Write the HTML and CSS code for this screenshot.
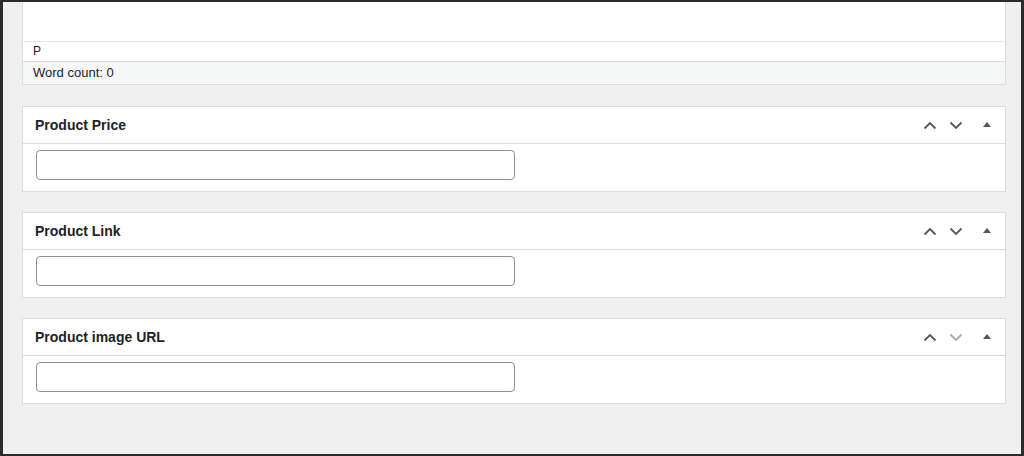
FILE: index.html
```html
<!DOCTYPE html>
<html>
<head>
<meta charset="utf-8">
<link rel="stylesheet" href="styles.css">
</head>
<body>
<div class="frame">
  <div class="editor">
    <div class="editor-area"></div>
    <div class="path">P</div>
    <div class="status">Word count: 0</div>
  </div>

  <div class="postbox">
    <div class="postbox-header">
      <h2 class="title">Product Price</h2>
      <div class="actions">
        <svg class="chev up" viewBox="0 0 14 9" width="14" height="9"><path d="M1.5 7.5 L7 2 L12.5 7.5"/></svg>
        <svg class="chev" viewBox="0 0 14 9" width="14" height="9"><path d="M1.5 1.5 L7 7 L12.5 1.5"/></svg>
        <svg class="tri" viewBox="0 0 8 6" width="8" height="6"><path d="M0 6 L4 1 L8 6 Z"/></svg>
      </div>
    </div>
    <div class="inside"><input class="field" type="text"></div>
  </div>

  <div class="postbox">
    <div class="postbox-header">
      <h2 class="title">Product Link</h2>
      <div class="actions">
        <svg class="chev up" viewBox="0 0 14 9" width="14" height="9"><path d="M1.5 7.5 L7 2 L12.5 7.5"/></svg>
        <svg class="chev" viewBox="0 0 14 9" width="14" height="9"><path d="M1.5 1.5 L7 7 L12.5 1.5"/></svg>
        <svg class="tri" viewBox="0 0 8 6" width="8" height="6"><path d="M0 6 L4 1 L8 6 Z"/></svg>
      </div>
    </div>
    <div class="inside"><input class="field" type="text"></div>
  </div>

  <div class="postbox">
    <div class="postbox-header">
      <h2 class="title">Product image URL</h2>
      <div class="actions">
        <svg class="chev up" viewBox="0 0 14 9" width="14" height="9"><path d="M1.5 7.5 L7 2 L12.5 7.5"/></svg>
        <svg class="chev disabled" viewBox="0 0 14 9" width="14" height="9"><path d="M1.5 1.5 L7 7 L12.5 1.5"/></svg>
        <svg class="tri" viewBox="0 0 8 6" width="8" height="6"><path d="M0 6 L4 1 L8 6 Z"/></svg>
      </div>
    </div>
    <div class="inside"><input class="field" type="text"></div>
  </div>
</div>
</body>
</html>
```

FILE: styles.css
```css
html, body {
  margin: 0;
  padding: 0;
  background: #2b2b2b;
}
body {
  width: 1024px;
  height: 456px;
  overflow: hidden;
  font-family: "Liberation Sans", Arial, sans-serif;
  color: #1d2327;
}
.frame {
  margin: 2px 3px;
  height: 452px;
  background: #f0f0f1;
  padding: 0 15px 0 19px;
  box-sizing: border-box;
  overflow: hidden;
}
.editor {
  background: #fff;
  border-left: 1px solid #dcdcde;
  border-right: 1px solid #dcdcde;
}
.editor-area {
  height: 39px;
  border-bottom: 1px solid #e8e8e8;
}
.path {
  height: 19px;
  line-height: 19px;
  font-size: 12px;
  padding-left: 10px;
  color: #1d2327;
}
.status {
  height: 22px;
  line-height: 22px;
  background: #f6f7f7;
  border-top: 1px solid #dcdcde;
  border-bottom: 1px solid #dcdcde;
  font-size: 13px;
  padding-left: 10px;
  color: #1d2327;
}
.postbox {
  margin-top: 21px;
  background: #fff;
  border: 1px solid #dcdcde;
}
.postbox + .postbox {
  margin-top: 20px;
}
.postbox-header {
  display: flex;
  align-items: center;
  justify-content: space-between;
  height: 36px;
  border-bottom: 1px solid #dcdcde;
}
.title {
  margin: 0;
  padding-left: 12px;
  font-size: 14px;
  font-weight: bold;
  color: #1d2327;
}
.actions {
  display: flex;
  align-items: center;
  padding-right: 14px;
}
.chev {
  fill: none;
  stroke: #50575e;
  stroke-width: 1.8;
}
.chev.up {
  margin-right: 12px;
}
.chev.disabled {
  stroke: #a7aaad;
}
.tri {
  fill: #50575e;
  margin-left: 20px;
  margin-bottom: 2px;
}
.inside {
  padding: 6px 12px 11px 13px;
}
.field {
  display: block;
  width: 479px;
  height: 30px;
  box-sizing: border-box;
  border: 1px solid #8c8f94;
  border-radius: 4px;
  background: #fff;
  margin: 0;
  padding: 0 8px;
}
```
